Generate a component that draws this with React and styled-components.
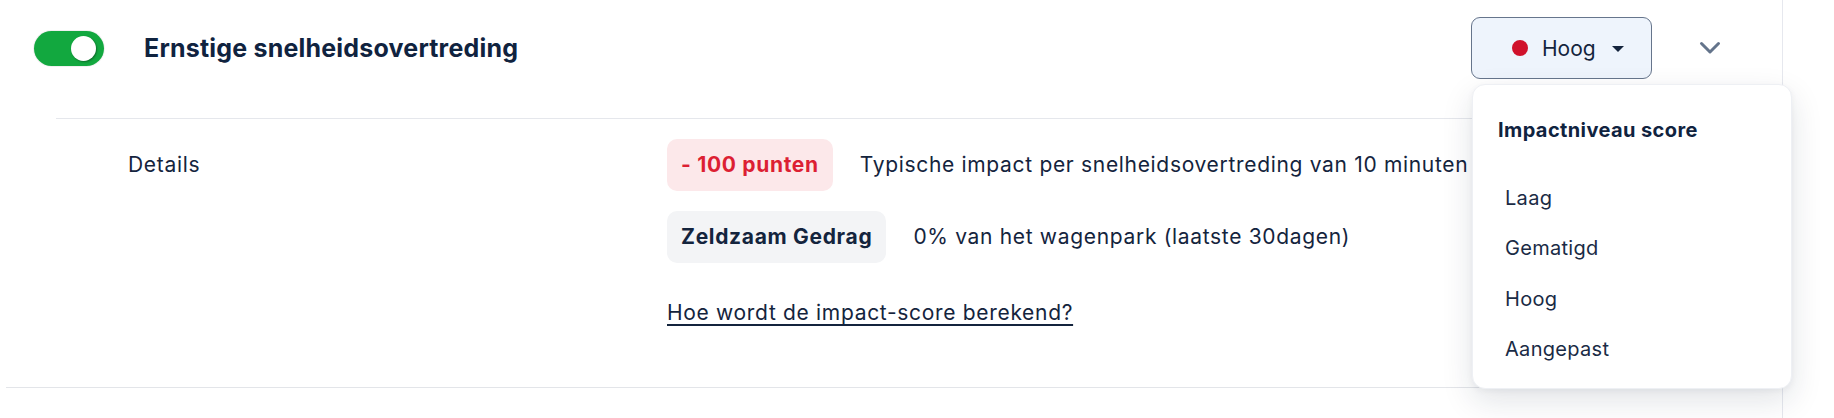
import React from "react";
import styled, { createGlobalStyle } from "styled-components";

const Global = createGlobalStyle`
  html, body { margin: 0; padding: 0; background: #ffffff; }
  body {
    font-family: Inter, "Noto Sans", sans-serif;
    color: #14243d;
    -webkit-font-smoothing: antialiased;
  }
  * { box-sizing: border-box; }
`;

const Page = styled.div`
  width: 1783px;
  height: 418px;
  border-right: 1px solid #e6e8ee;
  padding-left: 6px;
  overflow: visible;
`;

const Item = styled.section`
  width: 1737px;
  border-bottom: 1px solid #e3e5e9;
`;

const Header = styled.div`
  display: flex;
  align-items: center;
  padding: 17px 22px 39px 28px;
`;

const Toggle = styled.button`
  width: 70px;
  height: 35px;
  border: none;
  border-radius: 18px;
  background: #12a83f;
  box-shadow: 0 0 0 1px rgba(0, 0, 0, 0.06);
  display: flex;
  align-items: center;
  justify-content: ${(p) => (p.$on ? "flex-end" : "flex-start")};
  padding: 0 8px;
  cursor: pointer;
  flex-shrink: 0;
`;

const Knob = styled.span`
  width: 25px;
  height: 25px;
  border-radius: 50%;
  background: #ffffff;
  box-shadow: 1px 1px 2px rgba(0, 0, 0, 0.35);
`;

const Title = styled.h2`
  margin: 0 0 0 40px;
  font-size: 25px;
  letter-spacing: 0.2px;
  line-height: 30px;
  font-weight: 700;
  color: #10233f;
`;

const Actions = styled.div`
  margin-left: auto;
  display: flex;
  align-items: center;
`;

const SelectWrap = styled.div`
  position: relative;
`;

const SelectButton = styled.button`
  width: 181px;
  height: 62px;
  display: flex;
  align-items: center;
  padding: 0 0 0 40px;
  border: 1px solid #66758c;
  border-radius: 9px;
  background: #eef4fc;
  font-family: inherit;
  font-size: 21px;
  color: #14243d;
  cursor: pointer;
`;

const Dot = styled.span`
  width: 16px;
  height: 16px;
  border-radius: 50%;
  background: ${(p) => p.$color};
  margin-right: 14px;
`;

const Caret = styled.span`
  width: 0;
  height: 0;
  margin-left: 16px;
  border-left: 6px solid transparent;
  border-right: 6px solid transparent;
  border-top: 6px solid #14243d;
  margin-top: 2px;
`;

const ExpandButton = styled.button`
  margin-left: 47px;
  width: 22px;
  height: 14px;
  padding: 0;
  border: none;
  background: none;
  display: flex;
  cursor: pointer;
`;

const Menu = styled.div`
  position: absolute;
  top: calc(100% + 5px);
  left: 1px;
  width: 320px;
  padding: 33px 0 14px;
  background: #ffffff;
  border-radius: 13px;
  border: 1px solid #eef0f4;
  box-shadow: 0 12px 32px rgba(15, 30, 60, 0.12), 0 2px 6px rgba(15, 30, 60, 0.05);
  z-index: 10;
`;

const MenuTitle = styled.div`
  padding-left: 25px;
  font-size: 20px;
  letter-spacing: 0.4px;
  line-height: 24px;
  font-weight: 700;
  color: #10233f;
  margin-bottom: 31px;
`;

const MenuItem = styled.div`
  padding-left: 32px;
  height: 50.3px;
  line-height: 50px;
  font-size: 20px;
  letter-spacing: 0.3px;
  color: #1a2b45;
  cursor: pointer;
`;

const Divider = styled.div`
  height: 1px;
  margin-left: 50px;
  background: #e5e7ec;
`;

const Body = styled.div`
  display: grid;
  grid-template-columns: 539px 1fr;
  padding: 20px 0 62px 122px;
  font-size: 21px;
  letter-spacing: 0.68px;
`;

const Label = styled.div`
  line-height: 52px;
  color: #14243d;
`;

const Rows = styled.div`
  display: flex;
  flex-direction: column;
  gap: 20px;
  align-items: flex-start;
`;

const Row = styled.div`
  display: flex;
  align-items: center;
  gap: 27px;
`;

const Pill = styled.span`
  height: 52px;
  display: inline-flex;
  align-items: center;
  padding: 0 14px;
  border-radius: 10px;
  line-height: 24px;
  font-weight: 700;
  background: ${(p) => (p.$tone === "danger" ? "#fce8ea" : "#f3f4f6")};
  color: ${(p) => (p.$tone === "danger" ? "#dc1f33" : "#14243d")};
`;

const RowText = styled.span`
  line-height: 24px;
  color: #14243d;
  white-space: nowrap;
`;

const HelpLink = styled.a`
  margin-top: 18px;
  line-height: 24px;
  color: #14243d;
  text-decoration: underline;
  text-decoration-thickness: 2px;
  text-underline-offset: 4px;
  cursor: pointer;
`;

const levels = ["Laag", "Gematigd", "Hoog", "Aangepast"];

export default function App() {
  return (
    <>
      <Global />
      <Page>
        <Item>
          <Header>
            <Toggle $on aria-label="Ingeschakeld">
              <Knob />
            </Toggle>
            <Title>Ernstige snelheidsovertreding</Title>
            <Actions>
              <SelectWrap>
                <SelectButton>
                  <Dot $color="#d0112b" />
                  Hoog
                  <Caret />
                </SelectButton>
                <Menu>
                  <MenuTitle>Impactniveau score</MenuTitle>
                  {levels.map((l) => (
                    <MenuItem key={l}>{l}</MenuItem>
                  ))}
                </Menu>
              </SelectWrap>
              <ExpandButton aria-label="Uitklappen">
                <svg width="22" height="14" viewBox="0 0 22 14" fill="none">
                  <polyline
                    points="2.5,2.5 11,11 19.5,2.5"
                    stroke="#64748b"
                    strokeWidth="3"
                    strokeLinecap="round"
                    strokeLinejoin="round"
                  />
                </svg>
              </ExpandButton>
            </Actions>
          </Header>
          <Divider />
          <Body>
            <Label>Details</Label>
            <Rows>
              <Row>
                <Pill $tone="danger">- 100 punten</Pill>
                <RowText>Typische impact per snelheidsovertreding van 10 minuten</RowText>
              </Row>
              <Row>
                <Pill>Zeldzaam Gedrag</Pill>
                <RowText>0% van het wagenpark (laatste 30dagen)</RowText>
              </Row>
              <HelpLink>Hoe wordt de impact-score berekend?</HelpLink>
            </Rows>
          </Body>
        </Item>
      </Page>
    </>
  );
}
